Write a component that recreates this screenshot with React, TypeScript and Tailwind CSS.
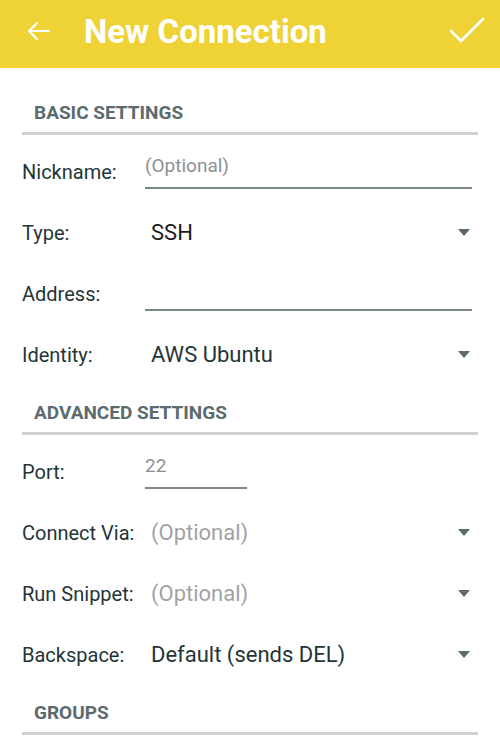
function SectionHeader({ title, first }: { title: string; first?: boolean }) {
  return (
    <div className={first ? "pt-[35px] pb-[6px]" : "pt-[18px] pb-[6px]"}>
      <div className="px-[34px] text-[19px] leading-[20px] font-bold text-[#5c6b6e]">
        {title}
      </div>
      <div className="mx-[22px] mt-[9px] h-[3px] bg-[#cfd1d1]" />
    </div>
  );
}

function TextRow({
  label,
  value,
  placeholder,
  short,
}: {
  label: string;
  value?: string;
  placeholder?: string;
  short?: boolean;
}) {
  return (
    <div className="flex h-[61px] items-center pl-[22px] pr-[28px]">
      <div className="w-[123px] text-[20px] text-[#1f3538]">{label}</div>
      <div
        className={
          "h-[34px] border-b-2 border-[#7a8789] text-[19px] leading-[22px] " +
          (short ? "w-[102px]" : "flex-1")
        }
      >
        <span className="text-[#8c9192]">{value ?? placeholder ?? ""}</span>
      </div>
    </div>
  );
}

function SelectRow({
  label,
  value,
  muted,
  dark,
}: {
  label: string;
  value: string;
  muted?: boolean;
  dark?: boolean;
}) {
  return (
    <div className="flex h-[61px] items-center pl-[22px] pr-[30px]">
      <div className="w-[129px] text-[20px] text-[#1f3538]">{label}</div>
      <div
        className={
          "flex-1 text-[22px] " +
          (muted ? "text-[#a0a3a4]" : dark ? "text-[#1f3538]" : "text-[#1c1c1c]")
        }
      >
        {value}
      </div>
      <svg width="12" height="8" viewBox="0 0 12 8">
        <polygon points="0,0 12,0 6,7" fill="#5a6b6e" />
      </svg>
    </div>
  );
}

export default function App() {
  return (
    <div className="w-[500px] h-[749px] overflow-hidden bg-white font-['Roboto',sans-serif]">
      <div className="flex h-[68px] items-center bg-[#efd236] px-[27px] pb-[6px] text-white">
        <svg width="24" height="20" viewBox="0 0 24 20" fill="none" stroke="white" strokeWidth="2.2" strokeLinecap="round" strokeLinejoin="round">
          <path d="M22 10H2M10 2L2 10L10 18" />
        </svg>
        <div className="ml-[33px] flex-1 text-[33px] font-bold leading-none">New Connection</div>
        <svg width="36" height="28" viewBox="0 0 36 28" fill="none" stroke="white" strokeWidth="2.6" strokeLinecap="round" strokeLinejoin="round" className="-mr-[12px] -mt-[2px]">
          <path d="M2 15L12 25L34 3" />
        </svg>
      </div>

      <SectionHeader title="BASIC SETTINGS" first />
      <TextRow label="Nickname:" placeholder="(Optional)" />
      <SelectRow label="Type:" value="SSH" />
      <TextRow label="Address:" />
      <SelectRow label="Identity:" value="AWS Ubuntu" dark />

      <SectionHeader title="ADVANCED SETTINGS" />
      <TextRow label="Port:" value="22" short />
      <SelectRow label="Connect Via:" value="(Optional)" muted />
      <SelectRow label="Run Snippet:" value="(Optional)" muted />
      <SelectRow label="Backspace:" value="Default (sends DEL)" dark />

      <SectionHeader title="GROUPS" />
    </div>
  );
}
